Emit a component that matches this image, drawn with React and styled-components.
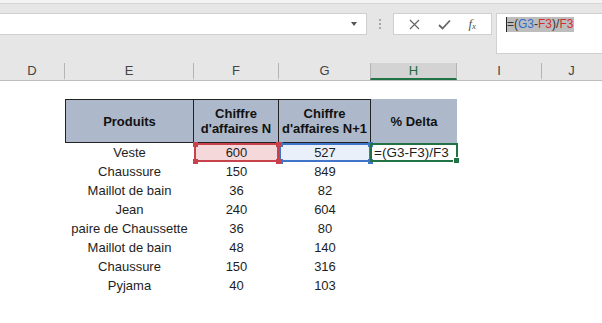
import React from 'react';
import styled, { createGlobalStyle } from 'styled-components';

const GlobalStyle = createGlobalStyle`
  html, body {
    margin: 0;
    padding: 0;
    background: #ffffff;
    overflow: hidden;
  }
  body {
    font-family: "Liberation Sans", Arial, sans-serif;
    color: #222;
  }
`;

const COLS = '65px 129px 85px 92px 86px 85px 1fr';

const Window = styled.div`
  width: 602px;
  height: 323px;
  overflow: hidden;
  background: #fff;
`;

const TopStrip = styled.div`
  height: 3px;
  background: #f3f3f3;
  border-bottom: 1px solid #d6d6d6;
`;

const FormulaArea = styled.div`
  display: flex;
  align-items: flex-start;
  height: 58px;
  padding-top: 9px;
  box-sizing: border-box;
  background: #e6e6e6;
`;

const NameBox = styled.div`
  width: 367px;
  height: 22px;
  box-sizing: border-box;
  background: #fff;
  border: 1px solid #d0d0d0;
  border-left: none;
  display: flex;
  align-items: center;
  justify-content: flex-end;
  padding-right: 9px;
`;

const DropArrow = styled.span`
  width: 0;
  height: 0;
  border-left: 3.5px solid transparent;
  border-right: 3.5px solid transparent;
  border-top: 4px solid #555;
`;

const Grip = styled.div`
  width: 26px;
  height: 22px;
  display: flex;
  flex-direction: column;
  align-items: center;
  justify-content: center;
  gap: 2px;

  span {
    width: 2px;
    height: 2px;
    background: #a8a8a8;
  }
`;

const Buttons = styled.div`
  width: 99px;
  height: 22px;
  box-sizing: border-box;
  background: #fff;
  border: 1px solid #d0d0d0;
  display: flex;
  align-items: center;
  justify-content: space-around;
  padding: 0 6px;
  color: #666;
`;

const Fx = styled.span`
  font-family: "Liberation Serif", "Times New Roman", serif;
  font-style: italic;
  font-size: 13px;
  color: #555;

  sub {
    font-size: 9px;
    vertical-align: -1px;
  }
`;

const FormulaBox = styled.div`
  flex: 1;
  margin-left: 4px;
  height: 41px;
  box-sizing: border-box;
  background: #fff;
  border: 1px solid #d0d0d0;
  border-right: none;
  padding: 3px 0 0 9px;
  font-size: 12px;
  line-height: 15px;
`;

const Highlight = styled.span`
  display: inline-block;
  background: #bdbdbd;
  color: #333;
  border-left: 1px solid #222;
  padding-right: 1px;
`;

const Ref = styled.span`
  color: ${({ $c }) => $c};
`;

const ColHeaders = styled.div`
  display: grid;
  grid-template-columns: ${COLS};
  height: 18px;
  background: #e6e6e6;
  border-bottom: 1px solid #bdbdbd;
`;

const ColLetter = styled.div`
  position: relative;
  display: flex;
  align-items: center;
  justify-content: center;
  font-size: 13px;
  color: ${({ $active }) => ($active ? '#1e6b40' : '#444')};
  background: ${({ $active }) => ($active ? '#d3d3d3' : 'transparent')};
  box-sizing: border-box;
  margin-top: 1px;
  border-right: 1px solid ${({ $sep }) => ($sep ? '#b4b4b4' : 'transparent')};
  border-bottom: 2px solid ${({ $active }) => ($active ? '#217346' : 'transparent')};
  ${({ $active }) => $active && 'border-left: 1px solid #b4b4b4; margin-left: -1px;'}
`;

const Sheet = styled.div`
  display: grid;
  grid-template-columns: ${COLS};
  grid-template-rows: 18px 44px;
  grid-auto-rows: 19px;
  font-size: 13px;
  color: #1e1e1e;
`;

const Cell = styled.div`
  position: relative;
  display: flex;
  align-items: center;
  justify-content: ${({ $left }) => ($left ? 'flex-start' : 'center')};
  white-space: nowrap;
  box-sizing: border-box;
  padding: ${({ $left }) => ($left ? '0 0 0 2px' : '0')};
  line-height: 19px;
`;

const HeadCell = styled.div`
  display: flex;
  align-items: center;
  justify-content: center;
  text-align: center;
  font-weight: bold;
  font-size: 13px;
  line-height: 15px;
  color: #111;
  background: #adb9ca;
  box-sizing: border-box;
  ${({ $boxed, $first }) =>
    $boxed &&
    `
    border-top: 1px solid #222;
    border-bottom: 1px solid #222;
    border-right: 1px solid #222;
    ${$first ? 'border-left: 1px solid #222;' : ''}
  `}
`;

const RefCell = styled(Cell)`
  background: ${({ $fill }) => $fill};
  border: 2px solid ${({ $line }) => $line};
  z-index: ${({ $z }) => $z || 1};
`;

const Handle = styled.span`
  position: absolute;
  width: 5px;
  height: 5px;
  background: ${({ $c }) => $c};
  ${({ $v }) => ($v === 't' ? 'top: -3.5px;' : 'bottom: -3.5px;')}
  ${({ $h }) => ($h === 'l' ? 'left: -3.5px;' : 'right: -3.5px;')}
`;

const ActiveCell = styled(Cell)`
  border: 2px solid #217346;
  margin-left: -1px;
  margin-right: -1px;
  padding-left: 2px;
  font-size: 13.5px;
  z-index: 3;
`;

const FillHandle = styled.span`
  position: absolute;
  right: -3px;
  bottom: -3px;
  width: 5px;
  height: 5px;
  background: #217346;
  border: 1px solid #fff;
  border-right: none;
  border-bottom: none;
`;

const Corners = ({ c }) => (
  <>
    <Handle $c={c} $v="t" $h="l" />
    <Handle $c={c} $v="t" $h="r" />
    <Handle $c={c} $v="b" $h="l" />
    <Handle $c={c} $v="b" $h="r" />
  </>
);

const rows = [
  ['Chaussure', 150, 849],
  ['Maillot de bain', 36, 82],
  ['Jean', 240, 604],
  ['paire de Chaussette', 36, 80],
  ['Maillot de bain', 48, 140],
  ['Chaussure', 150, 316],
  ['Pyjama', 40, 103],
];

const RED = '#c7424a';
const BLUE = '#3f74c9';

const App = () => (
  <Window>
    <GlobalStyle />
    <TopStrip />
    <FormulaArea>
      <NameBox>
        <DropArrow />
      </NameBox>
      <Grip>
        <span />
        <span />
        <span />
      </Grip>
      <Buttons>
        <svg width="11" height="11" viewBox="0 0 11 11">
          <path d="M1 1 L10 10 M10 1 L1 10" stroke="#666" strokeWidth="1.2" fill="none" />
        </svg>
        <svg width="13" height="11" viewBox="0 0 13 11">
          <path d="M1 6 L4.5 9.5 L12 1.5" stroke="#666" strokeWidth="1.8" fill="none" />
        </svg>
        <Fx>
          f<sub>x</sub>
        </Fx>
      </Buttons>
      <FormulaBox>
        <Highlight>
          =(<Ref $c="#2d6cd0">G3</Ref>-<Ref $c="#d32f2f">F3</Ref>)/<Ref $c="#d32f2f">F3</Ref>
        </Highlight>
      </FormulaBox>
    </FormulaArea>

    <ColHeaders>
      <ColLetter $sep>D</ColLetter>
      <ColLetter $sep>E</ColLetter>
      <ColLetter $sep>F</ColLetter>
      <ColLetter>G</ColLetter>
      <ColLetter $active $sep>H</ColLetter>
      <ColLetter $sep>I</ColLetter>
      <ColLetter>J</ColLetter>
    </ColHeaders>

    <Sheet>
      {/* row 1 */}
      <Cell style={{ gridColumn: '1 / -1' }} />

      {/* row 2: table header */}
      <Cell />
      <HeadCell $boxed $first>Produits</HeadCell>
      <HeadCell $boxed>
        Chiffre
        <br />
        d'affaires N
      </HeadCell>
      <HeadCell $boxed>
        Chiffre
        <br />
        d'affaires N+1
      </HeadCell>
      <HeadCell>% Delta</HeadCell>
      <Cell />
      <Cell />

      {/* row 3: formula being edited */}
      <Cell />
      <Cell>Veste</Cell>
      <RefCell $fill="#f5d8da" $line={RED} $z={2}>
        600
        <Corners c={RED} />
      </RefCell>
      <RefCell $fill="#eaf0f9" $line={BLUE}>
        527
        <Corners c={BLUE} />
      </RefCell>
      <ActiveCell $left>
        =(G3-F3)/F3
        <FillHandle />
      </ActiveCell>
      <Cell />
      <Cell />

      {rows.map(([name, n, n1], i) => (
        <React.Fragment key={i}>
          <Cell />
          <Cell>{name}</Cell>
          <Cell>{n}</Cell>
          <Cell>{n1}</Cell>
          <Cell />
          <Cell />
          <Cell />
        </React.Fragment>
      ))}
    </Sheet>
  </Window>
);

export default App;
